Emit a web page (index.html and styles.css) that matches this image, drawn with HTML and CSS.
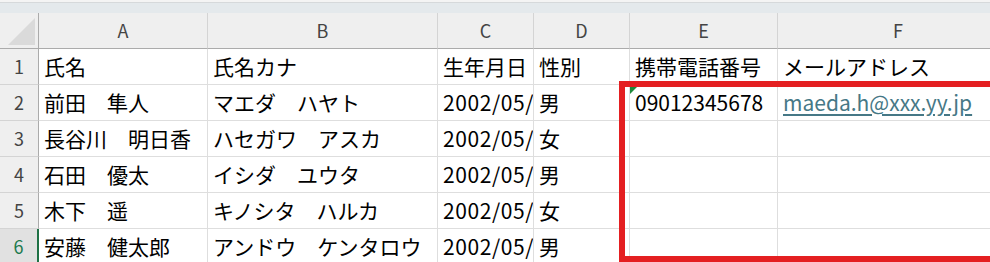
FILE: index.html
```html
<!DOCTYPE html>
<html lang="ja">
<head>
<meta charset="utf-8">
<title>名簿</title>
<link rel="stylesheet" href="styles.css">
</head>
<body>
<div class="sheet">
  <div class="topbar"></div>
  <div class="grid">
    <div class="corner"><span class="select-all"></span></div>
    <div class="colhead">A</div>
    <div class="colhead">B</div>
    <div class="colhead">C</div>
    <div class="colhead">D</div>
    <div class="colhead">E</div>
    <div class="colhead last">F</div>

    <div class="rowhead">1</div>
    <div class="cell">氏名</div>
    <div class="cell">氏名カナ</div>
    <div class="cell">生年月日</div>
    <div class="cell">性別</div>
    <div class="cell">携帯電話番号</div>
    <div class="cell">メールアドレス</div>

    <div class="rowhead">2</div>
    <div class="cell">前田　隼人</div>
    <div class="cell">マエダ　ハヤト</div>
    <div class="cell date">2002/05/</div>
    <div class="cell">男</div>
    <div class="cell text-number">09012345678</div>
    <div class="cell"><a class="link" href="#">maeda.h@xxx.yy.jp</a></div>

    <div class="rowhead">3</div>
    <div class="cell">長谷川　明日香</div>
    <div class="cell">ハセガワ　アスカ</div>
    <div class="cell date">2002/05/</div>
    <div class="cell">女</div>
    <div class="cell"></div>
    <div class="cell"></div>

    <div class="rowhead">4</div>
    <div class="cell">石田　優太</div>
    <div class="cell">イシダ　ユウタ</div>
    <div class="cell date">2002/05/</div>
    <div class="cell">男</div>
    <div class="cell"></div>
    <div class="cell"></div>

    <div class="rowhead">5</div>
    <div class="cell">木下　遥</div>
    <div class="cell">キノシタ　ハルカ</div>
    <div class="cell date">2002/05/</div>
    <div class="cell">女</div>
    <div class="cell"></div>
    <div class="cell"></div>

    <div class="rowhead active">6</div>
    <div class="cell">安藤　健太郎</div>
    <div class="cell">アンドウ　ケンタロウ</div>
    <div class="cell date">2002/05/</div>
    <div class="cell">男</div>
    <div class="cell"></div>
    <div class="cell"></div>
  </div>
  <div class="highlight"></div>
</div>
</body>
</html>
```

FILE: styles.css
```css
* {
  box-sizing: border-box;
}

html, body {
  margin: 0;
  padding: 0;
  background: #ffffff;
  overflow: hidden;
}

.sheet {
  position: relative;
  width: 990px;
  height: 262px;
  overflow: hidden;
  font-family: "Noto Sans CJK JP", "Noto Sans", sans-serif;
  color: #000000;
}

.topbar {
  height: 13px;
  background: #e4e9ec;
  border-top: 2px solid #f4f4f4;
  box-shadow: inset 0 1px 0 #d6d9db;
}

.grid {
  display: grid;
  grid-template-columns: 39px 169px 230px 96px 96px 148px 240px;
  grid-template-rows: 36px repeat(6, 36px);
}

.corner {
  position: relative;
  background: #efefef;
  border-right: 1px solid #ababab;
  border-bottom: 1px solid #ababab;
}

.select-all {
  position: absolute;
  right: 3px;
  bottom: 3px;
  width: 0;
  height: 0;
  border-left: 27px solid transparent;
  border-bottom: 27px solid #dadada;
}

.colhead {
  display: flex;
  align-items: center;
  justify-content: center;
  background: #efefef;
  border-right: 1px solid #d4d4d4;
  border-bottom: 1px solid #ababab;
  font-size: 18px;
  color: #444444;
  padding-bottom: 2px;
}

.colhead.last {
  border-right: none;
}

.rowhead {
  display: flex;
  align-items: center;
  justify-content: center;
  background: #efefef;
  border-right: 1px solid #ababab;
  border-bottom: 1px solid #d4d4d4;
  font-size: 18px;
  color: #444444;
  padding-bottom: 1px;
}

.rowhead.active {
  background: #e1e1e1;
  color: #1d7a4e;
  border-right: 2px solid #1e7145;
}

.cell {
  display: flex;
  align-items: center;
  padding: 0 0 1px 5px;
  border-right: 1px solid #dedede;
  border-bottom: 1px solid #dedede;
  font-size: 21px;
  white-space: nowrap;
  overflow: hidden;
  min-width: 0;
}

.date {
  letter-spacing: 0.6px;
}

.text-number {
  position: relative;
}

/* error indicator: number stored as text */
.text-number::before {
  content: "";
  position: absolute;
  left: 0;
  top: 0;
  width: 0;
  height: 0;
  border-top: 9px solid #1e8a3c;
  border-right: 9px solid transparent;
}

.link {
  color: #467886;
  text-decoration: underline;
  text-underline-offset: 3px;
}

.highlight {
  position: absolute;
  left: 619px;
  top: 81px;
  width: 420px;
  height: 181px;
  border: 6px solid #e41f21;
  pointer-events: none;
}
```
